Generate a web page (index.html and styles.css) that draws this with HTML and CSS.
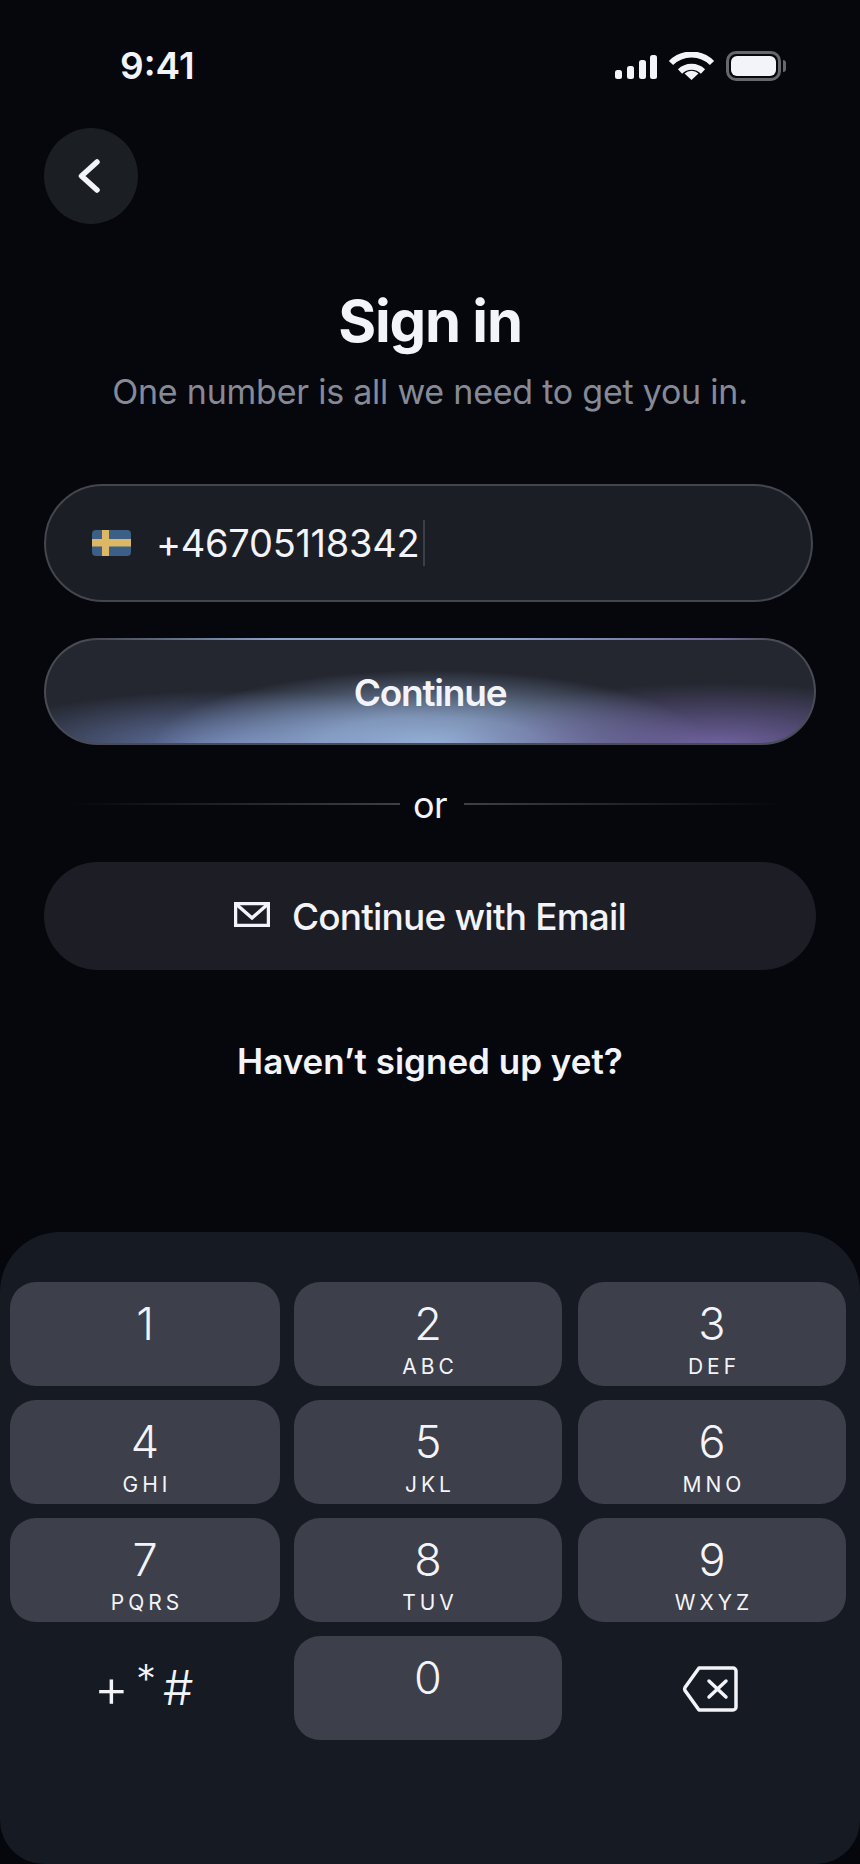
FILE: index.html
```html
<!DOCTYPE html>
<html lang="en">
<head>
<meta charset="UTF-8" />
<meta name="viewport" content="width=device-width, initial-scale=1" />
<title>Sign in</title>
<link rel="stylesheet" href="styles.css">
</head>
<body>

<div class="screen">
  <div class="status">
    <span class="time">9:41</span>
    <div class="status-icons">
      <svg class="signal" width="42" height="24" viewBox="0 0 42 24">
        <rect x="0" y="15" width="7" height="9" rx="2.5" />
        <rect x="12" y="11" width="7" height="13" rx="2.5" />
        <rect x="24" y="5" width="7" height="19" rx="2.5" />
        <rect x="35" y="0" width="7" height="24" rx="2.5" />
      </svg>
      <svg class="wifi" width="47" height="28" viewBox="0 0 47 28">
        <path d="M3 11 A29 29 0 0 1 44 11" />
        <path d="M12 19.5 A16.500 16.500 0 0 1 35 19.500" />
        <path class="wedge" d="M23.500 28 L16.500 21.500 A10.500 10.500 0 0 1 30.500 21.500 Z" />
      </svg>
      <div class="battery"><div class="battery-fill"></div></div>
    </div>
  </div>

  <button class="back" aria-label="Back">
    <svg width="22" height="34" viewBox="0 0 22 34"><path d="M19 3 L3.500 17 L19 31" /></svg>
  </button>

  <h1>Sign in</h1>
  <p class="subtitle">One number is all we need to get you in.</p>

  <div class="phone-field">
    <svg class="flag" width="39" height="26" viewBox="0 0 39 26">
      <rect width="39" height="26" rx="4" fill="#3b5f85" />
      <rect x="10" width="7" height="26" fill="#dcb766" />
      <rect y="9" width="39" height="7.500" fill="#dcb766" />
    </svg>
    <span class="phone-number">+46705118342</span>
    <span class="caret"></span>
  </div>

  <button class="btn-continue">Continue</button>

  <div class="divider">
    <span class="line line-left"></span>
    <span class="or">or</span>
    <span class="line line-right"></span>
  </div>

  <button class="btn-email">
    <svg width="36" height="25" viewBox="0 0 36 25">
      <rect x="1.500" y="1.500" width="33" height="22" />
      <path d="M2 2 L18 16 L34 2" />
    </svg>
    Continue with Email
  </button>

  <p class="signup">Haven’t signed up yet?</p>

  <div class="keypad">
    <div class="key"><span class="digit">1</span></div>
    <div class="key"><span class="digit">2</span><span class="letters">ABC</span></div>
    <div class="key"><span class="digit">3</span><span class="letters">DEF</span></div>
    <div class="key"><span class="digit">4</span><span class="letters">GHI</span></div>
    <div class="key"><span class="digit">5</span><span class="letters">JKL</span></div>
    <div class="key"><span class="digit">6</span><span class="letters">MNO</span></div>
    <div class="key"><span class="digit">7</span><span class="letters">PQRS</span></div>
    <div class="key"><span class="digit">8</span><span class="letters">TUV</span></div>
    <div class="key"><span class="digit">9</span><span class="letters">WXYZ</span></div>
    <div class="key key-plain"><span class="symbols"><span class="plus">+</span><span class="star">*</span><span>#</span></span></div>
    <div class="key"><span class="digit">0</span></div>
    <div class="key key-plain">
      <svg width="56" height="46" viewBox="0 0 56 46">
        <path class="outline" d="M17 2 H51 A3 3 0 0 1 54 5 V41 A3 3 0 0 1 51 44 H17 L3 24.500 A3 3 0 0 1 3 21.500 Z" />
        <path d="M27 15 L44 31 M44 15 L27 31" />
      </svg>
    </div>
  </div>
</div>

</body>
</html>
```

FILE: styles.css
```css
* {
  box-sizing: border-box;
}

body {
  margin: 0;
  background: #05070c;
  font-family: Inter, "Liberation Sans", sans-serif;
  color: #f3f4f9;
}

button {
  font-family: inherit;
  color: inherit;
  border: none;
  padding: 0;
}

.screen {
  width: 860px;
  height: 1864px;
  display: flex;
  flex-direction: column;
  overflow: hidden;
}

/* Status bar */
.status {
  height: 44px;
  margin-top: 44px;
  margin-bottom: 40px;
  padding: 0 73px 0 120px;
  display: flex;
  justify-content: space-between;
  align-items: center;
}

.time {
  font-size: 37px;
  font-weight: 600;
  line-height: 44px;
}

.status-icons {
  display: flex;
  align-items: center;
  gap: 11px;
}

.signal {
  fill: #f3f4f9;
  margin-top: 2px;
}

.wifi {
  fill: none;
  stroke: #f3f4f9;
  stroke-width: 6;
}

.wifi .wedge {
  fill: #f3f4f9;
  stroke: none;
}

.battery {
  width: 55px;
  height: 30px;
  margin-right: 6px;
  padding: 2px;
  border: 3px solid #66686f;
  border-radius: 10px;
  position: relative;
}

.battery::after {
  content: "";
  position: absolute;
  right: -8px;
  top: 6px;
  width: 3px;
  height: 12px;
  border-radius: 0 3px 3px 0;
  background: #66686f;
}

.battery-fill {
  height: 100%;
  background: #f3f4f9;
  border-radius: 6px;
}

/* Back */
.back {
  width: 94px;
  height: 96px;
  margin-left: 44px;
  border-radius: 50%;
  background: #1b1e23;
  display: flex;
  align-items: center;
  justify-content: center;
  padding-right: 4px;
}

.back svg {
  fill: none;
  stroke: #f3f4f9;
  stroke-width: 5.500;
  stroke-linecap: round;
  stroke-linejoin: round;
}

/* Heading */
h1 {
  margin: 62px 0 0;
  font-size: 58px;
  font-weight: 700;
  letter-spacing: -1.2px;
  line-height: 70px;
  text-align: center;
}

.subtitle {
  margin: 14px 0 0;
  font-size: 34px;
  letter-spacing: -0.23px;
  line-height: 44px;
  text-align: center;
  color: #868a97;
}

/* Phone input */
.phone-field {
  width: 769px;
  height: 118px;
  margin: 70px 0 0 44px;
  padding-left: 46px;
  background: #1c1e26;
  border: 2px solid #44464e;
  border-radius: 59px;
  display: flex;
  align-items: center;
}

.phone-number {
  margin-left: 25px;
  font-size: 38px;
  letter-spacing: -0.3px;
  line-height: 48px;
}

.caret {
  width: 2px;
  height: 46px;
  margin-left: 4px;
  background: #3d3f48;
}

/* Continue */
.btn-continue {
  width: 772px;
  height: 107px;
  margin: 36px 0 0 44px;
  padding-top: 2px;
  flex-shrink: 0;
  font-size: 37px;
  font-weight: 600;
  letter-spacing: -1.2px;
  border: 2px solid transparent;
  border-radius: 54px;
  background:
    radial-gradient(ellipse 270px 62px at 670px 105px, rgba(112, 98, 160, 1), rgba(104, 90, 150, 0) 100%) padding-box,
    radial-gradient(ellipse 280px 78px at 385px 108px, rgba(150, 176, 216, 1), rgba(146, 172, 212, 0.8) 40%, rgba(146, 172, 212, 0) 100%) padding-box,
    radial-gradient(ellipse 270px 58px at 190px 108px, rgba(106, 124, 176, 1), rgba(102, 120, 170, 0) 100%) padding-box,
    linear-gradient(#242730, #242730) padding-box,
    linear-gradient(90deg, #43454c 6%, #8ba3c9 30%, #8ba3c9 60%, #6f6795 88%, #43454c 96%) top / 100% 2px no-repeat border-box,
    linear-gradient(#4a4c55, #4a4c55) border-box;
}

/* Divider */
.divider {
  width: 710px;
  margin: 37px 0 0 70px;
  height: 46px;
  display: flex;
  align-items: center;
  gap: 14px;
}

.line {
  height: 2px;
  margin-top: -2px;
}

.line-left {
  width: 330px;
  background: linear-gradient(90deg, rgba(62, 64, 72, 0), #3e4048);
}

.line-right {
  flex: 1;
  background: linear-gradient(90deg, #3e4048, rgba(62, 64, 72, 0));
}

.or {
  margin: 0 3px 0 -1px;
  font-size: 36px;
  letter-spacing: -0.5px;
  line-height: 46px;
}

/* Email */
.btn-email {
  width: 772px;
  height: 108px;
  margin: 34px 0 0 44px;
  flex-shrink: 0;
  font-size: 37px;
  font-weight: 500;
  letter-spacing: -0.8px;
  background: #1c1d25;
  border-radius: 54px;
  display: flex;
  align-items: center;
  justify-content: center;
  gap: 22px;
}

.btn-email svg {
  fill: none;
  stroke: #f3f4f9;
  stroke-width: 3.500;
  margin-top: -4px;
}

.signup {
  margin: 69px 0 0;
  font-size: 35px;
  font-weight: 600;
  line-height: 44px;
  text-align: center;
}

/* Keypad */
.keypad {
  margin-top: auto;
  height: 632px;
  padding: 50px 0 0 10px;
  background: #161a23;
  border-radius: 60px 60px 44px 44px;
  display: grid;
  grid-template-columns: 270px 268px 268px;
  grid-auto-rows: 104px;
  column-gap: 15px;
  row-gap: 14px;
}

.key {
  background: #3d3f4a;
  border-radius: 26px;
  display: flex;
  flex-direction: column;
  align-items: center;
  padding-top: 15px;
}

/* middle column sits a pixel closer to the left one */
.key:nth-child(3n+2) {
  margin: 0 1px 0 -1px;
}

.digit {
  font-size: 45px;
  font-weight: 300;
  line-height: 54px;
}

.letters {
  margin-top: 4px;
  font-size: 21px;
  line-height: 24px;
  letter-spacing: 4px;
  margin-right: -4px;
}

.key-plain {
  background: none;
  padding-top: 0;
  justify-content: center;
}

.symbols {
  display: flex;
  gap: 7px;
  margin-left: -3px;
  font-size: 48px;
  font-weight: 300;
  line-height: 56px;
}

.plus {
  font-size: 54px;
}

.star {
  font-size: 40px;
  line-height: 38px;
}

.key-plain svg {
  fill: none;
  stroke: #f3f4f9;
  stroke-width: 3.500;
  stroke-linecap: round;
  stroke-linejoin: round;
  margin: 2px 4px 0 0;
}
```
